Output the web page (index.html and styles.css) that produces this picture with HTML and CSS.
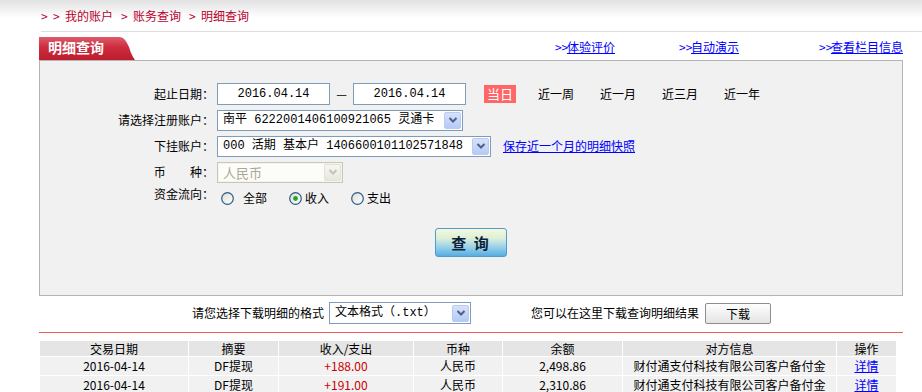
FILE: index.html
```html
<!DOCTYPE html>
<html lang="zh-CN">
<head>
    <meta charset="UTF-8">
    <title>明细查询</title>
    <link rel="stylesheet" href="styles.css">
</head>
<body>
    <div class="crumbs"><span class="sep">&gt;</span><span class="sep">&gt;</span>我的账户<span class="sep mid">&gt;</span>账务查询<span class="sep mid">&gt;</span>明细查询</div>

    <div class="page">
        <div class="head-row">
            <div class="tab">明细查询</div>
            <div class="links">
                <span class="link-item link-1"><span class="arr">&gt;&gt;</span><a href="#">体验评价</a></span>
                <span class="link-item link-2"><span class="arr">&gt;&gt;</span><a href="#">自动演示</a></span>
                <span class="link-item link-3"><span class="arr">&gt;&gt;</span><a href="#">查看栏目信息</a></span>
            </div>
        </div>

        <div class="panel">
            <div class="row">
                <span class="lbl">起止日期：</span>
                <input type="text" class="date" value="2016.04.14">
                <span class="dash">—</span>
                <input type="text" class="date" value="2016.04.14">
                <span class="quick active">当日</span>
                <span class="quick">近一周</span>
                <span class="quick">近一月</span>
                <span class="quick">近三月</span>
                <span class="quick">近一年</span>
            </div>
            <div class="row">
                <span class="lbl">请选择注册账户：</span>
                <div class="select sel-card">
                    <span class="sel-text">南平 6222001406100921065 灵通卡</span>
                    <span class="sel-btn"><svg width="10" height="8" viewBox="0 0 10 8"><polyline points="1.5,2 5,5.5 8.5,2" fill="none" stroke="#4d6185" stroke-width="2"/></svg></span>
                </div>
            </div>
            <div class="row">
                <span class="lbl">下挂账户：</span>
                <div class="select sel-sub">
                    <span class="sel-text">000 活期 基本户 1406600101102571848</span>
                    <span class="sel-btn"><svg width="10" height="8" viewBox="0 0 10 8"><polyline points="1.5,2 5,5.5 8.5,2" fill="none" stroke="#4d6185" stroke-width="2"/></svg></span>
                </div>
                <a href="#" class="snap">保存近一个月的明细快照</a>
            </div>
            <div class="row">
                <span class="lbl">币&nbsp;&nbsp;&nbsp;&nbsp;&nbsp;&nbsp;&nbsp;&nbsp;&nbsp;种：</span>
                <div class="select sel-cur disabled">
                    <span class="sel-text">人民币</span>
                    <span class="sel-btn"><svg width="10" height="8" viewBox="0 0 10 8"><polyline points="1.5,2 5,5.5 8.5,2" fill="none" stroke="#c4c3b6" stroke-width="2"/></svg></span>
                </div>
            </div>
            <div class="row row-radio">
                <span class="lbl">资金流向：</span>
                <div class="radios">
                    <label class="radio r-all">
                        <svg width="13" height="13" viewBox="0 0 13 13"><defs><linearGradient id="rg1" x1="0" y1="0" x2="1" y2="1"><stop offset="0" stop-color="#dcdcd6"/><stop offset="1" stop-color="#ffffff"/></linearGradient></defs><circle cx="6.5" cy="6.5" r="5.8" fill="url(#rg1)" stroke="#2c5a86" stroke-width="1.2"/></svg>
                        <span>全部</span>
                    </label>
                    <label class="radio">
                        <svg width="13" height="13" viewBox="0 0 13 13"><circle cx="6.5" cy="6.5" r="5.8" fill="url(#rg1)" stroke="#2c5a86" stroke-width="1.2"/><circle cx="6.5" cy="6.5" r="2.4" fill="#25a525"/></svg>
                        <span>收入</span>
                    </label>
                    <label class="radio">
                        <svg width="13" height="13" viewBox="0 0 13 13"><circle cx="6.5" cy="6.5" r="5.8" fill="url(#rg1)" stroke="#2c5a86" stroke-width="1.2"/></svg>
                        <span>支出</span>
                    </label>
                </div>
            </div>
            <div class="btn-row">
                <button class="query-btn">查 询</button>
            </div>
        </div>

        <div class="dl-row">
            <span>请您选择下载明细的格式</span>
            <div class="select sel-fmt">
                <span class="sel-text">文本格式（.txt）</span>
                <span class="sel-btn"><svg width="10" height="8" viewBox="0 0 10 8"><polyline points="1.5,2 5,5.5 8.5,2" fill="none" stroke="#4d6185" stroke-width="2"/></svg></span>
            </div>
            <span class="dl-tip">您可以在这里下载查询明细结果</span>
            <button class="dl-btn">下载</button>
        </div>

        <div class="red-line"></div>

        <table class="detail">
            <colgroup>
                <col class="c-date"><col class="c-sum"><col class="c-amt"><col class="c-cur">
                <col class="c-bal"><col class="c-peer"><col class="c-op">
            </colgroup>
            <tr class="th">
                <td>交易日期</td><td>摘要</td><td>收入/支出</td><td>币种</td><td>余额</td><td>对方信息</td><td>操作</td>
            </tr>
            <tr>
                <td>2016-04-14</td><td>DF提现</td><td class="amt">+188.00</td><td>人民币</td><td>2,498.86</td><td>财付通支付科技有限公司客户备付金</td><td><a href="#">详情</a></td>
            </tr>
            <tr>
                <td>2016-04-14</td><td>DF提现</td><td class="amt">+191.00</td><td>人民币</td><td>2,310.86</td><td>财付通支付科技有限公司客户备付金</td><td><a href="#">详情</a></td>
            </tr>
        </table>
    </div>
</body>
</html>
```

FILE: styles.css
```css
html {
    overflow: hidden;
}
body {
    margin: 0;
    font-family: "Noto Sans CJK SC", "Liberation Sans", sans-serif;
    font-size: 12px;
    line-height: 14px;
    color: #000;
    background: #fff linear-gradient(#e2e2e2, #fff 18px) no-repeat;
}
.crumbs {
    margin-left: 41px;
    height: 22px;
    padding-top: 9px;
    border-bottom: 1px solid #dedede;
    color: #b8002c;
}
.sep {
    display: inline-block;
    width: 12px;
}
.sep.mid {
    margin-left: 8px;
}
.page {
    margin-left: 39px;
    width: 864px;
}
.head-row {
    display: flex;
    margin-top: 5px;
    height: 23px;
}
.tab {
    width: 87px;
    height: 23px;
    padding-left: 9px;
    line-height: 21px;
    font-size: 14px;
    font-weight: bold;
    color: #fff;
    background: linear-gradient(#de5c6c 0, #cc2c3e 45%, #bd1d2d 100%);
    clip-path: polygon(0 0, 81px 0, 84px 1px, 86px 3px, 88px 6px, 90px 10px, 92px 16px, 94px 20px, 96px 23px, 0 23px);
}
.links {
    display: flex;
    margin-left: auto;
    padding-top: 3px;
    color: #00f;
}
.arr {
    display: inline-block;
    width: 12px;
}
.link-item a {
    color: #00f;
}
.link-2 {
    margin-left: 64px;
}
.link-3 {
    margin-left: 80px;
}
.panel {
    height: 214px;
    padding-top: 20px;
    border: 1px solid #b4b4b4;
    background-color: #f1f1f1;
}
.row {
    display: flex;
    align-items: center;
    height: 26px;
}
.lbl {
    width: 174px;
    margin-right: 3px;
    text-align: right;
}
input.date {
    width: 113px;
    height: 22px;
    box-sizing: border-box;
    margin: 0;
    border: 1px solid #7f9db9;
    font-family: "Liberation Mono", "Noto Sans CJK SC", monospace;
    font-size: 12px;
    text-align: center;
    background: #fff;
    color: #000;
}
.dash {
    width: 23px;
    text-align: center;
}
.quick {
    margin-left: 26px;
}
.quick.active {
    margin-left: 18px;
    margin-right: -4px;
    padding: 2px 3px;
    background-color: #f66;
    color: #fff;
    font-size: 13px;
}
.select {
    display: flex;
    align-items: center;
    height: 21px;
    box-sizing: border-box;
    padding: 1px;
    border: 1px solid #7f9db9;
    background: #fff;
    font-family: "Liberation Mono", "Noto Sans CJK SC", monospace;
}
.sel-text {
    flex: 1;
    padding-left: 4px;
    line-height: 17px;
    white-space: nowrap;
    overflow: hidden;
}
.sel-btn {
    display: flex;
    align-items: center;
    justify-content: center;
    width: 15px;
    height: 15px;
    border: 1px solid #b9cbf3;
    border-radius: 2px;
    background: linear-gradient(#d6e2fb, #b6caf5);
}
.sel-card {
    width: 246px;
}
.sel-sub {
    width: 274px;
}
.sel-cur {
    width: 126px;
}
.select.disabled {
    border-color: #c9c7ba;
    background: #f5f4ea;
    color: #aca899;
}
.select.disabled .sel-text {
    background: #fcfcf8;
    font-family: "Noto Sans CJK SC", sans-serif;
    font-size: 13px;
}
.select.disabled .sel-btn {
    border-color: #e3e2d8;
    background: linear-gradient(#f7f7f2, #e8e7de);
}
.snap {
    margin-left: 12px;
    color: #00f;
}
.row-radio {
    align-items: flex-start;
    height: 26px;
    padding-top: 2px;
}
.radios {
    display: flex;
    align-items: center;
    padding-top: 4px;
}
.radio {
    display: flex;
    align-items: center;
    gap: 3px;
    margin-right: 22px;
}
.r-all {
    margin-left: 4px;
    gap: 9px;
}
.btn-row {
    display: flex;
    justify-content: center;
    margin-top: 15px;
}
.query-btn {
    width: 72px;
    height: 29px;
    padding: 0;
    border: 1px solid #4c9ccf;
    border-radius: 3px;
    background: linear-gradient(#f4f8dc 0%, #dcefd8 35%, #93cdeb 70%, #57addf 100%);
    color: #0d1f3a;
    font-family: "Noto Sans CJK SC", sans-serif;
    font-size: 15px;
    font-weight: bold;
    letter-spacing: 2px;
}
.dl-row {
    display: flex;
    align-items: center;
    height: 22px;
    margin-top: 6px;
    padding-left: 153px;
}
.sel-fmt {
    width: 142px;
    margin-left: 5px;
    height: 22px;
}
.dl-tip {
    margin-left: 60px;
}
.dl-btn {
    width: 66px;
    height: 21px;
    margin-left: 6px;
    padding: 0;
    border: 1px solid #8e8e8e;
    border-radius: 2px;
    background: linear-gradient(#fefefe, #e4e4e4);
    font-family: "Noto Sans CJK SC", sans-serif;
    font-size: 12px;
    color: #000;
}
.red-line {
    height: 1px;
    margin-top: 8px;
    background-color: #ef5b5b;
}
.detail {
    margin-top: 7px;
    width: 858px;
    table-layout: fixed;
    border-collapse: separate;
    border-spacing: 1px;
}
.detail td {
    padding: 0;
    height: 18px;
    text-align: center;
    background-color: #f1f1f1;
    white-space: nowrap;
}
.detail .th td {
    height: 15px;
    background-color: #e5e5e5;
    line-height: 13px;
}
.detail a {
    color: #00f;
}
.detail .amt {
    color: #c00;
}
.c-date { width: 148px; }
.c-sum { width: 89px; }
.c-amt { width: 134px; }
.c-cur { width: 88px; }
.c-bal { width: 119px; }
.c-peer { width: 213px; }
.c-op { width: 59px; }
```
